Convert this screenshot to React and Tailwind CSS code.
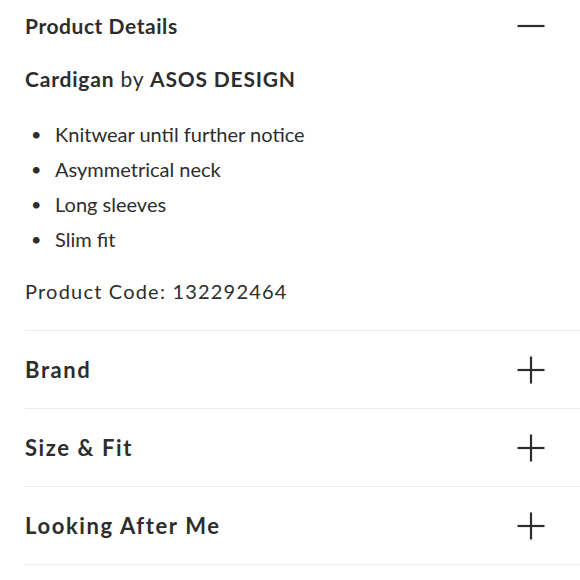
const bullets = ["Knitwear until further notice", "Asymmetrical neck", "Long sleeves", "Slim fit"];
const sections = ["Brand", "Size & Fit", "Looking After Me"];

function Sign({ plus }) {
  return (
    <svg width="28" height="28" viewBox="0 0 28 28" fill="none" stroke="#2d2d2d" strokeWidth="2.2">
      <line x1="0.5" y1="14" x2="27.5" y2="14" />
      {plus && <line x1="14" y1="0.5" x2="14" y2="27.5" />}
    </svg>
  );
}

export default function App() {
  return (
    <div
      className="min-h-screen bg-white pl-[25px] text-[#2d2d2d]"
      style={{ fontFamily: "Lato, 'Noto Sans', sans-serif" }}
    >
      <div className="flex h-[52px] items-center justify-between pr-[35px]">
        <h2 className="text-[21px] font-bold tracking-[0.55px]">Product Details</h2>
        <Sign />
      </div>
      <div className="border-b border-[#ececec] pb-[21px]">
        <p className="mt-[14px] text-[21px] leading-[26px] tracking-[0.8px]">
          <span className="font-bold">Cardigan</span> by <span className="font-bold">ASOS DESIGN</span>
        </p>
        <ul className="mt-[25px] text-[20px] leading-[35px]">
          {bullets.map((b) => (
            <li key={b} className="flex items-center">
              <span className="w-[30px] pl-[6px] text-[18px]">•</span>
              {b}
            </li>
          ))}
        </ul>
        <p className="mt-[17px] text-[20px] leading-[35px] tracking-[1.2px]">Product Code: 132292464</p>
      </div>
      {sections.map((s) => (
        <div key={s} className="flex h-[78px] items-center justify-between border-b border-[#ececec] pr-[35px]">
          <h3 className="text-[22px] font-bold tracking-[1.6px]">{s}</h3>
          <Sign plus />
        </div>
      ))}
    </div>
  );
}
